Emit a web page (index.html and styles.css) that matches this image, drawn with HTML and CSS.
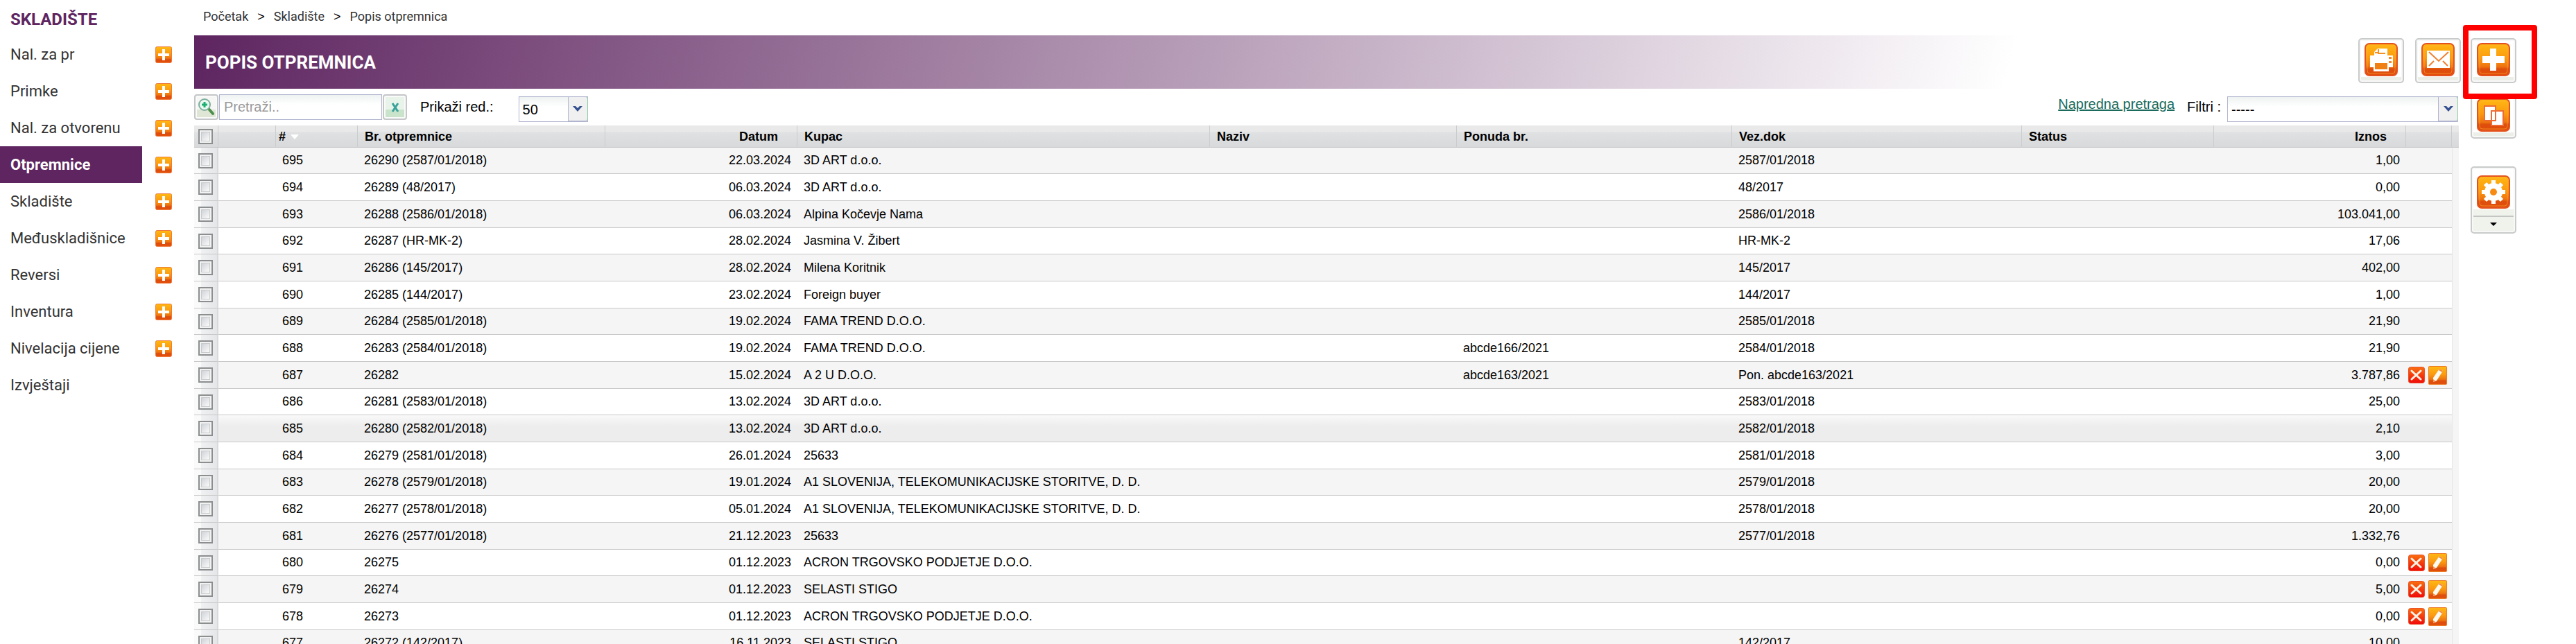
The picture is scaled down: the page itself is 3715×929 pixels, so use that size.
FILE: index.html
```
<!DOCTYPE html>
<html lang="hr">
<head>
    <meta charset="UTF-8">
    <meta name="viewport" content="width=device-width, initial-scale=1.0">
    <title>Popis otpremnica</title>
    <link rel="stylesheet" href="styles.css">
</head>
<body>
    <svg class="defs" aria-hidden="true">
        <defs>
            <linearGradient id="orange" x1="0" y1="0" x2="0" y2="1">
                <stop offset="0" stop-color="#ffb812"/>
                <stop offset="0.45" stop-color="#fb9a10"/>
                <stop offset="0.72" stop-color="#ee7410"/>
                <stop offset="0.8" stop-color="#dd4d0c"/>
                <stop offset="1" stop-color="#e2500c"/>
            </linearGradient>
            <linearGradient id="red" x1="0" y1="0" x2="0" y2="1">
                <stop offset="0" stop-color="#f9700f"/>
                <stop offset="1" stop-color="#f00a0a"/>
            </linearGradient>
        </defs>
        <symbol id="tile" viewBox="0 0 48 48">
            <rect x="1" y="1" width="46" height="46" rx="6" fill="url(#orange)" stroke="#e4531f" stroke-width="2"/>
            <rect x="4" y="4" width="40" height="40" rx="4" fill="none" stroke="#ffb43c" stroke-opacity="0.55"/>
        </symbol>
        <symbol id="add-small" viewBox="0 0 24 24">
            <rect x="0.5" y="0.5" width="23" height="23" rx="2" fill="url(#orange)" stroke="#ee7a3c"/>
            <path d="M10 4h4v6h6v4h-6v6h-4v-6H4v-4h6z" fill="#fff"/>
        </symbol>
        <symbol id="delete" viewBox="0 0 24 24">
            <rect x="0.5" y="0.5" width="23" height="23" rx="3" fill="url(#red)" stroke="#e8502c"/>
            <path d="M5 6l13 12M18 6L5 18" stroke="#fff3e6" stroke-width="3" stroke-linecap="round"/>
        </symbol>
        <symbol id="edit" viewBox="0 0 27 27">
            <rect x="0.5" y="0.5" width="26" height="26" rx="1" fill="url(#orange)" stroke="#ec7a28"/>
            <path d="M16 4l5 3-9 14-5 2 0-6z" fill="#fffaf0"/>
            <path d="M16 4l5 3-1 2-5-3zM7 19l3 2-3 2z" fill="#f58a3c"/>
        </symbol>
    </svg>

    <div class="page">
        <nav class="sidebar">
            <h2>SKLADIŠTE</h2>
            <ul id="menu"></ul>
        </nav>

        <main class="content">
            <div class="breadcrumb">
                <a href="#">Početak</a><span>&gt;</span><a href="#">Skladište</a><span>&gt;</span><a href="#">Popis otpremnica</a>
            </div>

            <header class="title-bar">
                <h1>POPIS OTPREMNICA</h1>
                <div class="title-actions">
                    <button class="tool" aria-label="Ispis">
                        <svg viewBox="0 0 48 48"><use href="#tile"/><path d="M19 8h14v11H14v-6z" fill="#fff"/><path d="M19 15h11M20 9v5h-5" fill="none" stroke="#f59022" stroke-width="2"/><path d="M8 18h33v17h-6v6H13v-6H8z" fill="#fff"/><path d="M15 29h18v9H15z" fill="#f08014"/><path d="M35 20h4v3h-4zM35 26h4v3h-4z" fill="#f08a30"/></svg>
                    </button>
                    <button class="tool" aria-label="E-mail">
                        <svg viewBox="0 0 48 48"><use href="#tile"/><rect x="8" y="11" width="33" height="25" fill="#fff"/><path d="M11 13l14 13 14-13M11 33l7-7M38 33l-7-7" fill="none" stroke="#f08030" stroke-width="2"/></svg>
                    </button>
                </div>
            </header>

            <div class="toolbar">
                <button class="square-btn" aria-label="Traži">
                    <svg width="25" height="27" viewBox="0 0 25 27"><path d="M16 16l6 7" stroke="#4f8f4c" stroke-width="4" stroke-linecap="round"/><circle cx="10" cy="10" r="8" fill="#eafaf2" stroke="#7fae9e" stroke-width="2"/><path d="M10 6v8M6 10h8" stroke="#1fae72" stroke-width="3"/></svg>
                </button>
                <input type="text" class="search" placeholder="Pretraži.." aria-label="Pretraži">
                <button class="square-btn clear" aria-label="Očisti">
                    <svg width="14" height="14" viewBox="0 0 14 14"><path d="M3 1l8 12M11 1L3 13" stroke="#3aa39c" stroke-width="3"/></svg>
                </button>
                <label for="rows">Prikaži red.:</label>
                <div class="select rows">
                    <select id="rows"><option>50</option><option>100</option></select>
                    <span class="arrow"><svg width="16" height="10" viewBox="0 0 16 10"><path d="M1 1h4l3 3 3-3h4L8 9z" fill="#34508e"/></svg></span>
                </div>
                <a href="#" class="advanced">Napredna pretraga</a>
                <label for="filter" class="filter-label">Filtri :</label>
                <div class="select filter">
                    <select id="filter"><option>-----</option></select>
                    <span class="arrow"><svg width="16" height="10" viewBox="0 0 16 10"><path d="M1 1h4l3 3 3-3h4L8 9z" fill="#34508e"/></svg></span>
                </div>
            </div>

            <table>
                <colgroup>
                    <col class="c-check"><col class="c-blank"><col class="c-id"><col class="c-number"><col class="c-date"><col class="c-buyer"><col class="c-name"><col class="c-offer"><col class="c-doc"><col class="c-status"><col class="c-amount"><col class="c-actions"><col class="c-end">
                </colgroup>
                <thead>
                    <tr>
                        <th class="check"><input type="checkbox" aria-label="Označi sve"></th>
                        <th></th>
                        <th class="id"># <span class="sort"></span></th>
                        <th>Br. otpremnice</th>
                        <th class="num">Datum</th>
                        <th>Kupac</th>
                        <th>Naziv</th>
                        <th>Ponuda br.</th>
                        <th>Vez.dok</th>
                        <th>Status</th>
                        <th class="num">Iznos</th>
                        <th></th>
                        <th></th>
                    </tr>
                </thead>
                <tbody id="rows-body"></tbody>
            </table>
        </main>

        <aside class="side-tools">
            <button class="tool highlighted" aria-label="Dodaj">
                <svg viewBox="0 0 48 48"><use href="#tile"/><path d="M19 8h9v11h12v10H28v11h-9V29H8V19h11z" fill="#fff"/></svg>
            </button>
            <button class="tool" aria-label="Kopiraj">
                <svg viewBox="0 0 48 48"><use href="#tile"/><path d="M11 11h16v21H11zM21 18h17v21H21z" fill="#fff" stroke="#ee6c34" stroke-width="2"/></svg>
            </button>
            <button class="tool settings" aria-label="Postavke">
                <svg viewBox="0 0 48 48"><use href="#tile"/><circle cx="24" cy="24" r="9" fill="none" stroke="#fff" stroke-width="8"/><path d="M24 7v34M7 24h34M12 12l24 24M36 12L12 36" stroke="#fff" stroke-width="6"/><circle cx="24" cy="24" r="5" fill="#f68c14"/></svg>
                <span class="more"></span>
            </button>
        </aside>
    </div>

    <script>
        const menu = ['Nal. za pr', 'Primke', 'Nal. za otvorenu', 'Otpremnice', 'Skladište', 'Međuskladišnice', 'Reversi', 'Inventura', 'Nivelacija cijene', 'Izvještaji'];

        // id, number, date, buyer, offer, linked document, amount, editable
        const rows = [
            [695, '26290 (2587/01/2018)', '22.03.2024', '3D ART d.o.o.', '', '2587/01/2018', '1,00'],
            [694, '26289 (48/2017)', '06.03.2024', '3D ART d.o.o.', '', '48/2017', '0,00'],
            [693, '26288 (2586/01/2018)', '06.03.2024', 'Alpina Kočevje Nama', '', '2586/01/2018', '103.041,00'],
            [692, '26287 (HR-MK-2)', '28.02.2024', 'Jasmina V. Žibert', '', 'HR-MK-2', '17,06'],
            [691, '26286 (145/2017)', '28.02.2024', 'Milena Koritnik', '', '145/2017', '402,00'],
            [690, '26285 (144/2017)', '23.02.2024', 'Foreign buyer', '', '144/2017', '1,00'],
            [689, '26284 (2585/01/2018)', '19.02.2024', 'FAMA TREND D.O.O.', '', '2585/01/2018', '21,90'],
            [688, '26283 (2584/01/2018)', '19.02.2024', 'FAMA TREND D.O.O.', 'abcde166/2021', '2584/01/2018', '21,90'],
            [687, '26282', '15.02.2024', 'A 2 U D.O.O.', 'abcde163/2021', 'Pon. abcde163/2021', '3.787,86', true],
            [686, '26281 (2583/01/2018)', '13.02.2024', '3D ART d.o.o.', '', '2583/01/2018', '25,00'],
            [685, '26280 (2582/01/2018)', '13.02.2024', '3D ART d.o.o.', '', '2582/01/2018', '2,10'],
            [684, '26279 (2581/01/2018)', '26.01.2024', '25633', '', '2581/01/2018', '3,00'],
            [683, '26278 (2579/01/2018)', '19.01.2024', 'A1 SLOVENIJA, TELEKOMUNIKACIJSKE STORITVE, D. D.', '', '2579/01/2018', '20,00'],
            [682, '26277 (2578/01/2018)', '05.01.2024', 'A1 SLOVENIJA, TELEKOMUNIKACIJSKE STORITVE, D. D.', '', '2578/01/2018', '20,00'],
            [681, '26276 (2577/01/2018)', '21.12.2023', '25633', '', '2577/01/2018', '1.332,76'],
            [680, '26275', '01.12.2023', 'ACRON TRGOVSKO PODJETJE D.O.O.', '', '', '0,00', true],
            [679, '26274', '01.12.2023', 'SELASTI STIGO', '', '', '5,00', true],
            [678, '26273', '01.12.2023', 'ACRON TRGOVSKO PODJETJE D.O.O.', '', '', '0,00', true],
            [677, '26272 (142/2017)', '16.11.2023', 'SELASTI STIGO', '', '142/2017', '10,00']
        ];

        document.getElementById('menu').innerHTML = menu.map(name => {
            const add = name === 'Izvještaji' ? '' : `<button aria-label="Dodaj: ${name}"><svg width="24" height="24"><use href="#add-small"/></svg></button>`;
            return `<li><a href="#"${name === 'Otpremnice' ? ' class="active"' : ''}>${name}</a>${add}</li>`;
        }).join('');

        const actions = '<div class="actions"><button aria-label="Obriši"><svg width="24" height="24"><use href="#delete"/></svg></button><button aria-label="Uredi"><svg width="27" height="27"><use href="#edit"/></svg></button></div>';

        document.getElementById('rows-body').innerHTML = rows.map(([id, number, date, buyer, offer, doc, amount, editable]) => `
            <tr${id === 685 ? ' class="hovered"' : ''}>
                <td class="check"><input type="checkbox" aria-label="Označi ${id}"></td>
                <td></td>
                <td class="id">${id}</td>
                <td>${number}</td>
                <td class="num">${date}</td>
                <td>${buyer}</td>
                <td></td>
                <td>${offer}</td>
                <td>${doc}</td>
                <td></td>
                <td class="num">${amount}</td>
                <td class="buttons">${editable ? actions : ''}</td>
                <td class="end"></td>
            </tr>`).join('');
    </script>
</body>
</html>
```
FILE: styles.css
```
*, *::after {
    box-sizing: border-box;
}
body {
    margin: 0;
    height: 100vh;
    overflow: hidden;
    background: #fff;
    color: #000;
    font-family: "Liberation Sans", Arial, sans-serif;
    font-size: 18px;
}
button {
    padding: 0;
    border: none;
    background: none;
    cursor: pointer;
}
svg {
    display: block;
}
.defs {
    position: absolute;
    width: 0;
    height: 0;
}
.page {
    display: flex;
}

/* sidebar */
.sidebar {
    flex: none;
    width: 280px;
    font-family: Roboto, sans-serif;
}
.sidebar h2 {
    margin: 0;
    padding: 3px 15px 0;
    height: 52px;
    line-height: 50px;
    font-size: 24px;
    color: #5e2560;
}
.sidebar ul {
    margin: 0;
    padding: 0;
    list-style: none;
}
.sidebar li {
    display: flex;
    align-items: center;
    height: 53px;
}
.sidebar a {
    width: 205px;
    margin-right: 19px;
    padding-left: 15px;
    line-height: 53px;
    font-size: 22px;
    color: #333;
    text-decoration: none;
}
.sidebar a.active {
    background: #5e2560;
    color: #fff;
    font-weight: bold;
}

/* main column */
.content {
    flex: 1;
    min-width: 0;
}
.breadcrumb {
    display: flex;
    gap: 13px;
    height: 51px;
    padding-left: 13px;
    line-height: 48px;
}
.breadcrumb a {
    font-family: Roboto, sans-serif;
    color: #333;
    text-decoration: none;
}
.title-bar {
    display: flex;
    justify-content: space-between;
    height: 77px;
    padding-left: 16px;
    background: linear-gradient(105deg, #5e2560, #fff 80%);
}
.title-bar h1 {
    margin: 0;
    line-height: 78px;
    font-family: Roboto, sans-serif;
    font-size: 26px;
    color: #fff;
}
.title-actions {
    display: flex;
    gap: 16px;
    padding-top: 4px;
}
.tool {
    display: flex;
    flex-direction: column;
    align-items: center;
    width: 66px;
    height: 65px;
    padding-top: 5px;
    border: 2px solid #c9cbcb;
    border-radius: 5px;
    background: linear-gradient(#fff 54px, #eceee8 54px);
    box-shadow: inset 0 0 0 2px #f8f8f8;
}
.tool svg {
    width: 48px;
    height: 48px;
}

/* search and filters */
.toolbar {
    display: flex;
    align-items: center;
    height: 53px;
    padding-right: 4px;
    font-size: 20px;
}
.square-btn {
    display: flex;
    align-items: center;
    justify-content: center;
    width: 35px;
    height: 37px;
    border: 2px solid #c4c6c8;
    border-radius: 4px;
    background: linear-gradient(#f6f6f4 60%, #dfe6d6 60%);
    box-shadow: inset 0 0 0 2px #fafafa;
}
.clear {
    background: linear-gradient(#e8f4ea 60%, #c9e4cb 60%);
}
.search {
    width: 235px;
    height: 37px;
    margin: 0 1px;
    padding: 0 6px;
    border: 1px solid #b0b4ce;
    background: linear-gradient(#eef3f2, #fff 14px);
    font: inherit;
}
.search::placeholder {
    color: #999;
}
.toolbar label {
    margin-left: 19px;
}
.select {
    position: relative;
    height: 37px;
}
.toolbar .select {
    margin-top: 6px;
}
.select select {
    width: 100%;
    height: 37px;
    padding: 0 34px 0 5px;
    border: 1px solid #b0b4ce;
    background: linear-gradient(#eef3f2, #fff 14px);
    font: inherit;
    appearance: none;
}
.select .arrow {
    position: absolute;
    top: 0;
    right: 0;
    display: flex;
    align-items: center;
    justify-content: center;
    width: 29px;
    height: 36px;
    border: 1px solid #b0b4ce;
    border-right-color: #8fd0a8;
    border-radius: 0 4px 4px 0;
    background: #f0f0f0;
    pointer-events: none;
}
.rows {
    width: 100px;
    margin-left: 36px;
}
.advanced {
    margin: 0 18px 8px auto;
    color: #1a6b5c;
}
.toolbar .filter-label {
    margin-left: 0;
}
.filter {
    width: 333px;
    margin-left: 9px;
}

/* table */
table {
    width: calc(100% - 3px);
    table-layout: fixed;
    border-collapse: separate;
    border-spacing: 0;
}
.c-check { width: 35px; }
.c-blank { width: 83px; }
.c-id { width: 118px; }
.c-number { width: 357px; }
.c-date { width: 277px; }
.c-buyer { width: 595px; }
.c-name { width: 356px; }
.c-offer { width: 397px; }
.c-doc { width: 418px; }
.c-status { width: 277px; }
.c-amount { width: 277px; }
.c-actions { width: 66px; }
.c-end { width: 10px; }
th, td {
    padding: 0 9px;
    text-align: left;
    white-space: nowrap;
}
th {
    height: 32px;
    padding-top: 1px;
    padding-left: 10px;
    border-right: 1px solid #cbccce;
    border-bottom: 1px solid #c4c5c7;
    background: linear-gradient(#e9e9e9 30%, #e0e1e2 31%, #d8d9db);
}
th:last-child {
    border-right: none;
}
td {
    height: 39px;
    border-bottom: 1px solid #c8c8c8;
}
tr:nth-child(3n+1) td {
    height: 38px;
}
tbody tr:nth-child(odd) {
    background: #f5f5f5;
}
tbody tr.hovered {
    background: linear-gradient(#f9f9f9, #ededed 40%);
}
.num {
    text-align: right;
}
th.num {
    padding-right: 27px;
}
th.id {
    padding-left: 4px;
}
.sort {
    display: inline-block;
    margin-left: 2px;
    vertical-align: middle;
    border: 6px solid transparent;
    border-top: 7px solid #fff;
    border-bottom: none;
}
.check {
    padding: 0 0 0 6px;
}
td.check {
    border-right: 2px solid #d8dadc;
    background: linear-gradient(to right, #fafafa 30%, #f0f1f2 31%, #e4e6e9);
}
.check input {
    appearance: none;
    display: block;
    width: 21px;
    height: 22px;
    margin: 0;
    border: 2px solid #8c8f90;
    background: linear-gradient(135deg, #c3c8d0, #f6f6f6 75%);
    box-shadow: inset 0 0 0 2px #f2f2f2, inset 0 0 0 3px #c9cbcd;
}
.buttons {
    padding: 0 3px;
}
.actions {
    display: flex;
    align-items: center;
    gap: 5px;
}
td.end {
    padding: 0;
    border-left: 1px solid #e6e6e6;
    border-bottom: none;
    background: #f5f5f5;
}

/* right column */
.side-tools {
    flex: none;
    width: 166px;
    padding: 55px 0 0 14px;
}
.side-tools .tool {
    margin-bottom: 15px;
}
.side-tools .settings {
    height: 97px;
    margin-top: 40px;
    padding-top: 11px;
    background: linear-gradient(#fff 60px, #f0f2ec 60px, #f0f2ec 69px, #c4c6c4 69px, #c4c6c4 71px, #f0f2ec 71px);
}
.more {
    margin-top: 20px;
    border: 5px solid transparent;
    border-top-color: #000;
    border-bottom: none;
}
.highlighted {
    position: relative;
}
.highlighted::after {
    content: "";
    position: absolute;
    top: -21px;
    left: -13px;
    width: 107px;
    height: 107px;
    border: 8px solid #f00;
    border-radius: 4px;
}
```
